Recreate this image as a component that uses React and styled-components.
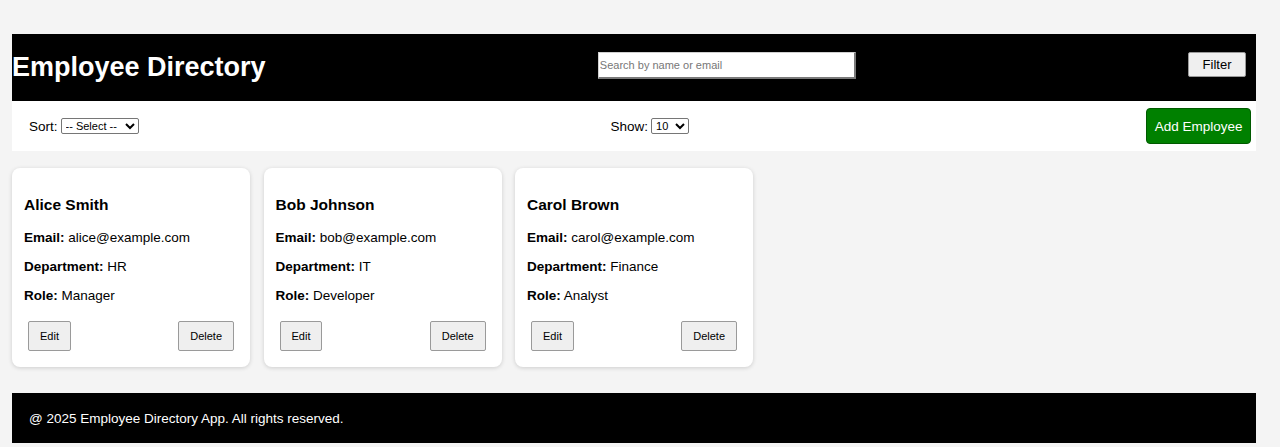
import React from "react";
import styled, { createGlobalStyle } from "styled-components";

const GlobalStyle = createGlobalStyle`
  html, body {
    margin: 0;
    padding: 0;
    background: #f4f4f4;
    font-family: "Liberation Sans", Arial, sans-serif;
    color: #000;
  }
`;

const Page = styled.div`
  padding: 34px 24px 4px 12px;
  display: flex;
  flex-direction: column;
`;

const Header = styled.header`
  height: 67px;
  background: #000;
  display: flex;
  align-items: center;
  justify-content: space-between;
  padding-right: 10px;
`;

const Title = styled.h1`
  margin: 0;
  color: #fff;
  font-size: 27px;
  font-weight: bold;
  line-height: 1;
`;

const Search = styled.input`
  width: 258px;
  height: 27px;
  box-sizing: border-box;
  margin-top: -4px;
  padding: 0 1px;
  font-family: "Liberation Sans", Arial, sans-serif;
  font-size: 11px;
  border-style: solid;
  border-width: 1px 2px 2px 1px;
  border-color: #d0d0d0 #7a7a7a #7a7a7a #d0d0d0;
  background: #fff;
  &::placeholder {
    color: #777;
  }
`;

const GreyButton = styled.button`
  font-family: "Liberation Sans", Arial, sans-serif;
  font-size: ${p => (p.small ? "11px" : "13px")};
  height: ${p => (p.small ? "30px" : "25px")};
  padding: 0 ${p => (p.small ? "11px" : "13.5px")};
  margin-top: ${p => (p.small ? "0" : "-6px")};
  background: #efefef;
  color: #000;
  border: 1px solid #9a9a9a;
  border-radius: 2px;
`;

const Controls = styled.div`
  height: 50px;
  background: #fff;
  display: flex;
  align-items: center;
  justify-content: space-between;
  padding: 0 5px 0 17px;
`;

const Field = styled.label`
  display: flex;
  align-items: center;
  gap: 3px;
  font-size: 13.5px;
  margin-left: ${p => (p.shift ? "15px" : "0")};
`;

const Select = styled.select`
  font-family: "Liberation Sans", Arial, sans-serif;
  font-size: 11px;
  height: 16px;
  padding: 0;
  border: 1px solid #767676;
  border-radius: 2px;
  background: #fff;
  width: ${p => p.w}px;
`;

const AddButton = styled.button`
  font-family: "Liberation Sans", Arial, sans-serif;
  font-size: 13.5px;
  height: 36px;
  padding: 0 7.5px;
  background: #008000;
  color: #fff;
  border: 1px solid #005a00;
  border-radius: 4px;
`;

const Grid = styled.main`
  display: grid;
  grid-template-columns: repeat(auto-fill, 238px);
  gap: 13.5px;
  margin-top: 17px;
`;

const Card = styled.div`
  background: #fff;
  border-radius: 8px;
  box-shadow: 0 1px 4px rgba(0, 0, 0, 0.16);
  padding: 12px 12px 16px;
  display: flex;
  flex-direction: column;
`;

const Name = styled.h3`
  margin: 16px 0 16px;
  font-size: 15.5px;
  line-height: 18px;
`;

const Info = styled.p`
  margin: 0 0 13px;
  font-size: 13.5px;
  line-height: 16px;
  &:last-of-type {
    margin-bottom: 17px;
  }
`;

const Actions = styled.div`
  display: flex;
  justify-content: space-between;
  padding: 0 4px;
`;

const Footer = styled.footer`
  margin-top: 26px;
  height: 50px;
  background: #000;
  color: #fff;
  display: flex;
  align-items: center;
  padding: 0 17px;
  font-size: 13.5px;
`;

const employees = [
  { name: "Alice Smith", email: "alice@example.com", dept: "HR", role: "Manager" },
  { name: "Bob Johnson", email: "bob@example.com", dept: "IT", role: "Developer" },
  { name: "Carol Brown", email: "carol@example.com", dept: "Finance", role: "Analyst" },
];

const App = () => {
  return (
    <Page>
      <GlobalStyle />
      <Header>
        <Title>Employee Directory</Title>
        <Search placeholder="Search by name or email" />
        <GreyButton>Filter</GreyButton>
      </Header>
      <Controls>
        <Field>
          Sort:
          <Select w={78} defaultValue="">
            <option value="">-- Select --</option>
          </Select>
        </Field>
        <Field shift>
          Show:
          <Select w={38} defaultValue="10">
            <option value="10">10</option>
          </Select>
        </Field>
        <AddButton>Add Employee</AddButton>
      </Controls>
      <Grid>
        {employees.map(e => (
          <Card key={e.name}>
            <Name>{e.name}</Name>
            <Info>
              <strong>Email:</strong> {e.email}
            </Info>
            <Info>
              <strong>Department:</strong> {e.dept}
            </Info>
            <Info>
              <strong>Role:</strong> {e.role}
            </Info>
            <Actions>
              <GreyButton small>Edit</GreyButton>
              <GreyButton small>Delete</GreyButton>
            </Actions>
          </Card>
        ))}
      </Grid>
      <Footer>@ 2025 Employee Directory App. All rights reserved.</Footer>
    </Page>
  );
};

export default App;
